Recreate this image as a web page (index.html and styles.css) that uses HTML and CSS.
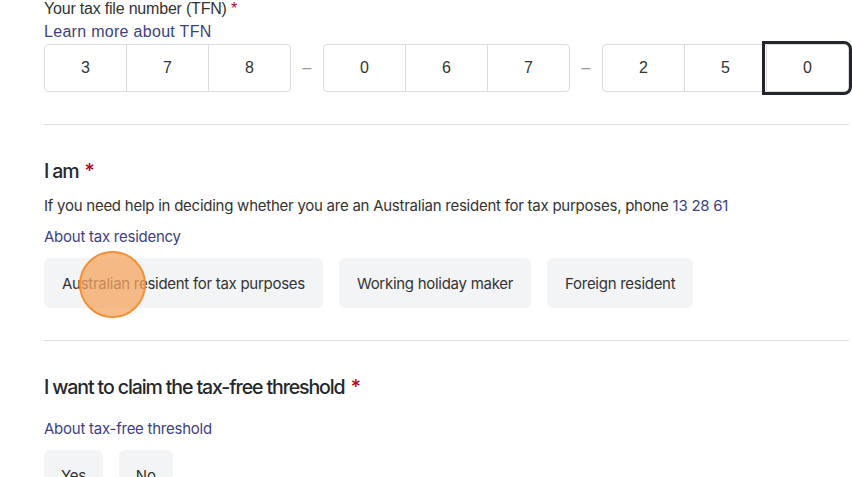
FILE: index.html
```html
<!DOCTYPE html>
<html>
<head>
    <title>Tax file number declaration</title>
    <link rel="stylesheet" href="styles.css">
</head>
<body>
    <div class="form">

        <div class="tfn">
            <label class="tfn-label">Your tax file number (TFN) <span class="req">*</span></label>
            <a class="tfn-link" href="#">Learn more about TFN</a>
            <div class="tfn-row">
                <div class="tfn-group">
                    <div class="cell">3</div>
                    <div class="cell">7</div>
                    <div class="cell">8</div>
                </div>
                <div class="dash">&ndash;</div>
                <div class="tfn-group">
                    <div class="cell">0</div>
                    <div class="cell">6</div>
                    <div class="cell">7</div>
                </div>
                <div class="dash">&ndash;</div>
                <div class="tfn-group">
                    <div class="cell">2</div>
                    <div class="cell">5</div>
                    <div class="cell focus">0</div>
                </div>
            </div>
        </div>

        <hr class="divider">

        <div class="question">
            <h2 class="q-title">I am <span class="req">*</span></h2>
            <p class="q-help">If you need help in deciding whether you are an Australian resident for tax purposes, phone <a href="#">13 28 61</a></p>
            <a class="q-link" href="#">About tax residency</a>
            <div class="chips">
                <button class="chip">Australian resident for tax purposes</button>
                <button class="chip">Working holiday maker</button>
                <button class="chip">Foreign resident</button>
            </div>
        </div>

        <hr class="divider">

        <div class="question">
            <h2 class="q-title">I want to claim the tax-free threshold <span class="req">*</span></h2>
            <a class="q-link spaced" href="#">About tax-free threshold</a>
            <div class="chips">
                <button class="chip small">Yes</button>
                <button class="chip small">No</button>
            </div>
        </div>

    </div>

    <!-- click marker -->
    <div class="click-dot"></div>
</body>
</html>
```

FILE: styles.css
```css
* {
    margin: 0;
    padding: 0;
    box-sizing: border-box;
}

:root {
    --text: #2b2d31;
    --link: #3d3f80;
    --red: #b3001b;
    --line: #dcdcdc;
    --chip-bg: #f3f4f6;
}

body {
    position: relative;
    height: 477px;
    overflow: hidden;
    background: #fff;
    font-family: Inter, "Liberation Sans", Arial, sans-serif;
    color: var(--text);
}

div.form {
    width: 805px;
    margin-left: 44px;
    margin-top: -3px;
}

.req {
    color: var(--red);
}

a {
    color: var(--link);
    text-decoration: none;
}

/* tfn block */
div.tfn {
    font-family: "Liberation Sans", Arial, sans-serif;
}

.tfn-label {
    display: block;
    font-size: 16px;
    line-height: 24px;
    color: #333;
    letter-spacing: -0.2px;
}

.tfn-link {
    display: block;
    font-size: 16px;
    line-height: 22px;
    letter-spacing: 0.3px;
}

.tfn-row {
    display: flex;
    margin-top: 1px;
    height: 48px;
}

.tfn-group {
    flex: 1;
    display: flex;
    border: 1px solid var(--line);
    border-radius: 4px;
}

.tfn-group .cell {
    flex: 1;
    display: flex;
    justify-content: center;
    align-items: center;
    font-size: 16px;
    color: #333;
    border-left: 1px solid var(--line);
}

.tfn-group .cell:first-child {
    border-left: 0;
}

.tfn-group .cell.focus {
    outline: 3px solid #22262b;
    outline-offset: 1px;
    border-radius: 0 4px 4px 0;
}

.dash {
    width: 32px;
    display: flex;
    justify-content: center;
    align-items: center;
    color: #9a9a9a;
    font-size: 16px;
}

hr.divider {
    border: 0;
    border-top: 1px solid #dedede;
    margin-top: 32px;
}

/* questions */
div.question {
    padding-top: 32px;
}

.q-title {
    font-size: 19.5px;
    font-weight: 500;
    letter-spacing: -1.1px;
    line-height: 28px;
    color: #24272b;
}

.q-title .req {
    margin-left: 2px;
}

.q-help {
    margin-top: 9px;
    font-size: 15px;
    letter-spacing: -0.25px;
    line-height: 24px;
    color: #333;
}

.q-link {
    display: block;
    margin-top: 7px;
    font-size: 15px;
    letter-spacing: -0.25px;
    line-height: 24px;
}

.q-link.spaced {
    margin-top: 16px;
}

.chips {
    display: flex;
    gap: 16px;
    margin-top: 9px;
}

.chip {
    height: 50px;
    padding: 0 18px;
    border: 0;
    border-radius: 6px;
    background: var(--chip-bg);
    font-family: Inter, "Liberation Sans", Arial, sans-serif;
    font-size: 15px;
    letter-spacing: -0.28px;
    color: #333;
}

.chip.small {
    padding: 0 17px;
}

.click-dot {
    position: absolute;
    left: 79px;
    top: 251px;
    width: 67px;
    height: 67px;
    border-radius: 50%;
    background: rgba(246, 165, 95, 0.75);
    border: 2px solid #f2913a;
}
```
